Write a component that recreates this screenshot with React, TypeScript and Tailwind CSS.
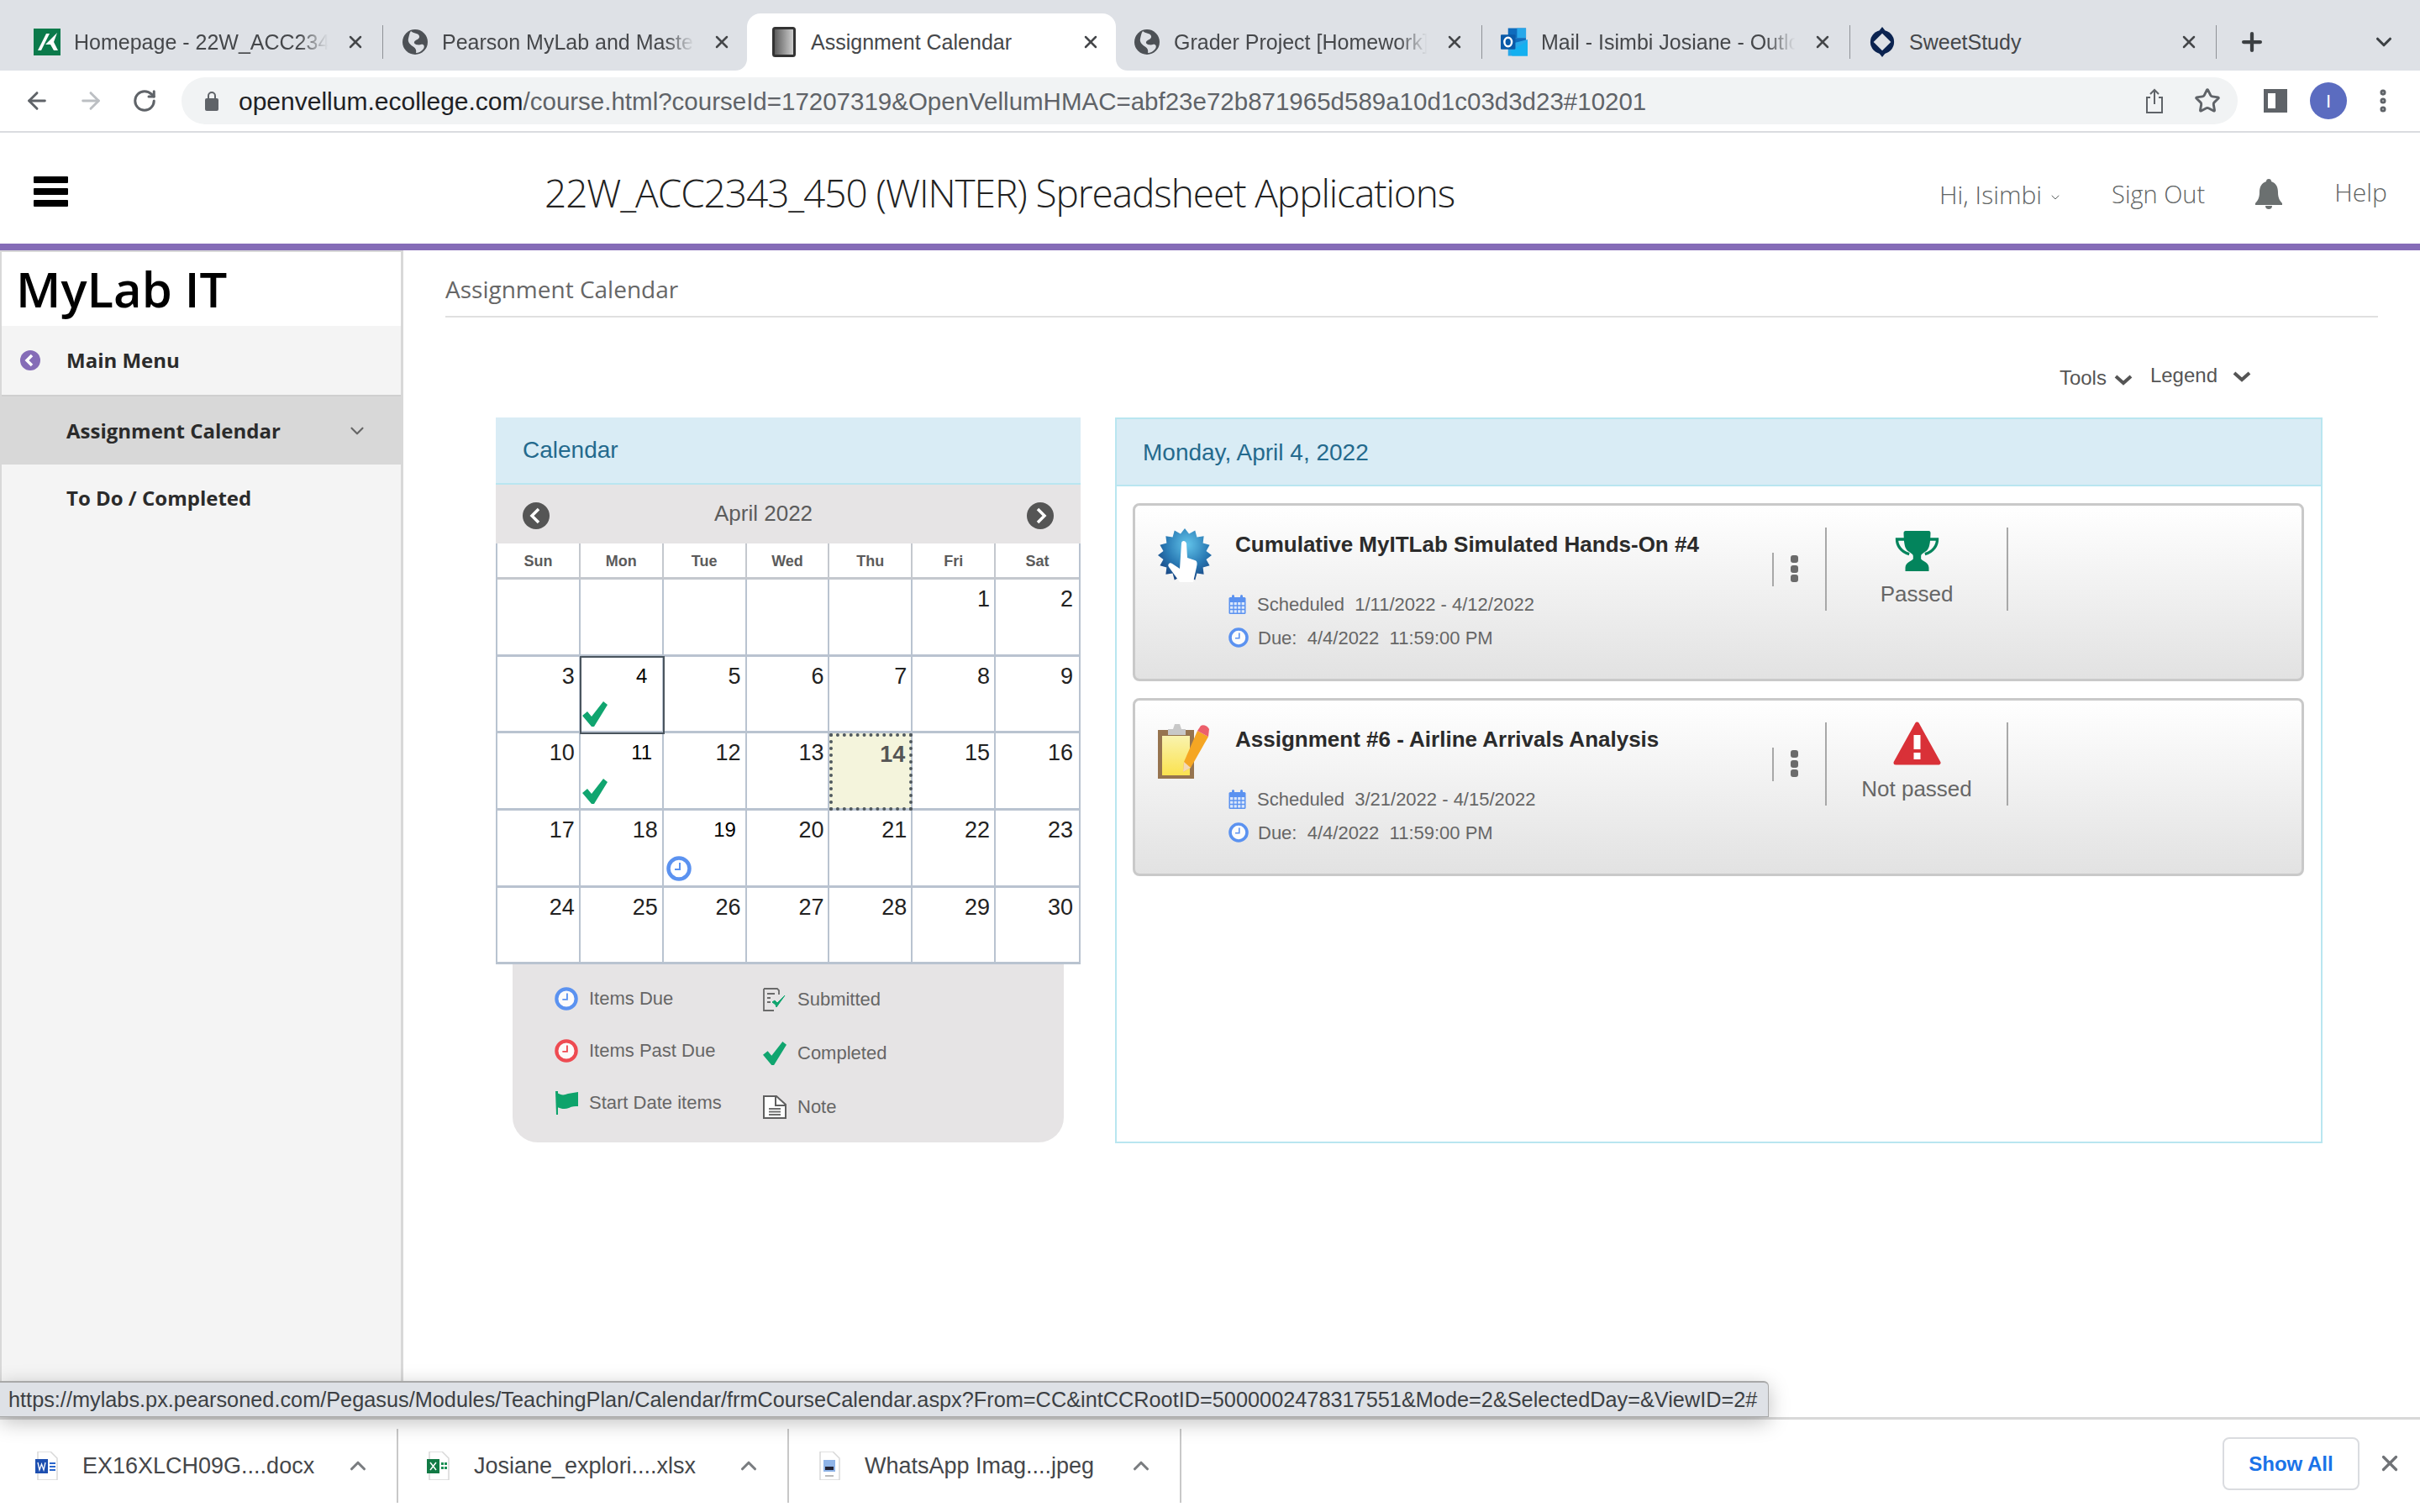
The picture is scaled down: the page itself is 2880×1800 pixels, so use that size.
import React from "react";
import { ArrowLeft, ArrowRight, RotateCw, Star, EllipsisVertical, X, Plus, ChevronDown, ChevronUp } from "lucide-react";

const Globe = () => (
  <svg width="32" height="34" viewBox="0 0 32 32">
    <circle cx="16" cy="16" r="15" fill="#4d5156" />
    <path d="M11 3c3 3 9 2 10 6s-5 4-6 7 5 4 8 3 5 2 3 5-6 5-9 5c1-4-1-6-4-8s-6-5-5-9 1-6 3-9z" fill="#dee1e6" />
  </svg>
);
const GreenIcon = () => (
  <svg width="32" height="32" viewBox="0 0 32 32">
    <rect width="32" height="32" fill="#0b7a4b" />
    <path d="M5 26 15 6h4L9 26zM14 19l14-14-4 11 5 10h-5l-4-7z" fill="#fff" />
  </svg>
);
const BookIcon = () => (
  <svg width="28" height="36" viewBox="0 0 28 36">
    <defs>
      <linearGradient id="bk" x1="0" y1="0" x2="1" y2="0">
        <stop offset="0" stopColor="#555" />
        <stop offset="1" stopColor="#d5d5d5" />
      </linearGradient>
    </defs>
    <rect x="1.5" y="1.5" width="25" height="33" rx="2" fill="url(#bk)" stroke="#333" strokeWidth="3" />
  </svg>
);
const OutlookIcon = () => (
  <svg width="33" height="34" viewBox="0 0 33 34">
    <rect x="9" y="0" width="22" height="12" fill="#0f6cbd" />
    <rect x="20" y="0" width="11" height="12" fill="#28a8ea" />
    <rect x="9" y="12" width="22" height="12" fill="#0f6cbd" />
    <path d="M9 20 33 14v20H9z" fill="#28a8ea" />
    <path d="M12 28 33 16v18H14z" fill="#14b0f0" />
    <rect x="0" y="8" width="18" height="18" rx="1" fill="#0a5aa8" />
    <ellipse cx="9" cy="17" rx="4.5" ry="5.5" fill="none" stroke="#fff" strokeWidth="2.5" />
  </svg>
);
const SweetIcon = () => (
  <svg width="34" height="38" viewBox="0 0 34 38">
    <circle cx="17" cy="19" r="15" fill="#0b2350" />
    <path d="M17 0l4 5h-8zM17 38l4-5h-8z" fill="#0b2350" />
    <path d="M17 8 28 19 17 30 6 19z" fill="#dee1e6" />
  </svg>
);

const Clock = ({ size = 30, color = "#5b92f0" }: { size?: number; color?: string }) => (
  <svg width={size} height={size} viewBox="0 0 30 30" className="shrink-0">
    <circle cx="15" cy="15" r="12.5" fill="#fff" fillOpacity="0.85" stroke={color} strokeWidth="4.5" />
    <path d="M16 8v8h-6" fill="none" stroke={color} strokeWidth="2" />
  </svg>
);
const Check = ({ size = 30 }: { size?: number }) => (
  <svg width={size} height={size} viewBox="0 0 30 30" className="shrink-0">
    <path d="M0 17l6-5 5 6L25 0l5 4-16 26h-3z" fill="#10a56f" />
  </svg>
);
const CalMini = () => (
  <svg width="21" height="23" viewBox="0 0 21 23" className="shrink-0">
    <rect x="0.5" y="3" width="20" height="20" rx="1.5" fill="#5b92f0" />
    <rect x="2" y="9" width="17" height="12.5" fill="#dce8fb" />
    <path d="M6 9v13M10.500 9v13M15 9v13M2 13h17M2 17.500h17" stroke="#5b92f0" strokeWidth="1.300" />
    <rect x="4" y="0" width="3" height="6" rx="1.500" fill="#5b92f0" />
    <rect x="14" y="0" width="3" height="6" rx="1.500" fill="#5b92f0" />
  </svg>
);
const sealPoints = Array.from({ length: 32 }, (_, i) => {
  const r = i % 2 === 0 ? 32 : 26;
  const a = (i * Math.PI) / 16;
  return `${32 + r * Math.sin(a)},${32 - r * Math.cos(a)}`;
}).join(" ");
const Seal = () => (
  <svg width="64" height="64" viewBox="0 0 64 64" className="shrink-0">
    <defs>
      <radialGradient id="seal" cx="0.55" cy="0.3" r="0.8">
        <stop offset="0" stopColor="#62c4ea" />
        <stop offset="0.5" stopColor="#2a7bb5" />
        <stop offset="1" stopColor="#12306f" />
      </radialGradient>
    </defs>
    <polygon points={sealPoints} fill="url(#seal)" />
    <path d="M28 18c0-4 5-4 6 0l1 17 9 3c3 1 3 4 2 8l-4 18H26L13 46c-2-3 1-6 4-4l9 6z" fill="#fff" />
  </svg>
);
const Clipboard = () => (
  <svg width="62" height="66" viewBox="0 0 62 66" className="shrink-0">
    <defs>
      <linearGradient id="pad" x1="0" y1="0" x2="0" y2="1">
        <stop offset="0" stopColor="#f9f3ae" />
        <stop offset="1" stopColor="#fbe24f" />
      </linearGradient>
    </defs>
    <rect x="0" y="8" width="43" height="58" fill="#96744f" />
    <rect x="5" y="15" width="33" height="47" fill="url(#pad)" />
    <path d="M12 14V7h6l2-6h6l2 6h5v7z" fill="#c8c8c8" />
    <path d="M47 9l13 7-21 37-9 5 1-12z" fill="#f5a623" />
    <path d="M47 9l4-6c3-2 8 0 10 4l-1 9z" fill="#ec5f6b" />
    <path d="M30 58l1-12 8 7z" fill="#f3d9b4" />
  </svg>
);
const Trophy = () => (
  <svg width="53" height="48" viewBox="0 0 156 144" className="mt-[6px]">
    <path d="M37 0h83c4 0 6 3 6 8-1 22-1 44-10 58-6 10-24 14-24 24v9c0 8 28 12 28 32v13H36v-13c0-20 28-24 28-32v-9c0-10-18-14-24-24C31 52 31 30 30 8c0-5 3-8 7-8z" fill="#03845c" />
    <path d="M36 30H6c0 22 14 45 44 53M120 30h30c0 22-14 45-44 53" fill="none" stroke="#03845c" strokeWidth="10" />
  </svg>
);
const Warn = () => (
  <svg width="57" height="52" viewBox="0 0 57 52">
    <path d="M28.500 3 54 49H3z" fill="#d93138" stroke="#d93138" strokeWidth="5" strokeLinejoin="round" />
    <rect x="24.500" y="16" width="8" height="17" fill="#fff" />
    <rect x="24.500" y="37" width="8" height="8" fill="#fff" />
  </svg>
);
const Kebab = () => (
  <div className="flex flex-col gap-[2.5px]">
    <div className="w-[9px] h-[9px] rounded-[3px] bg-[#6b6b6b]" />
    <div className="w-[9px] h-[9px] rounded-[3px] bg-[#6b6b6b]" />
    <div className="w-[9px] h-[9px] rounded-[3px] bg-[#6b6b6b]" />
  </div>
);
const NavCircle = ({ dir }: { dir: "l" | "r" }) => (
  <svg width="32" height="32" viewBox="0 0 32 32" className="shrink-0 mt-[3px]">
    <circle cx="16" cy="16" r="16" fill="#555" />
    <path d={dir === "l" ? "M19 8l-8 8 8 8" : "M13 8l8 8-8 8"} fill="none" stroke="#fff" strokeWidth="3.500" />
  </svg>
);
const FileIcon = ({ kind }: { kind: "word" | "excel" | "img" }) => (
  <svg width="28" height="34" viewBox="0 0 28 34" className="shrink-0">
    <path d="M3 0h15l8 8v26H3z" fill="#fff" stroke="#d8d8d8" strokeWidth="1.500" />
    {kind === "word" && (
      <>
        <rect x="0" y="9" width="15" height="17" fill="#1d4fb0" />
        <path d="M3 13l2 9 2.500-7 2.500 7 2-9" fill="none" stroke="#fff" strokeWidth="1.300" />
        <path d="M17 14h7M17 18h7M17 22h7" stroke="#2b66cc" strokeWidth="2" />
      </>
    )}
    {kind === "excel" && (
      <>
        <rect x="0" y="9" width="15" height="17" fill="#127a45" />
        <path d="M4 13l7 9M11 13l-7 9" stroke="#fff" strokeWidth="1.500" />
        <path d="M17 13h3v3h-3zM21 13h3v3h-3zM17 18h3v3h-3zM21 18h3v3h-3z" fill="#1c8f54" />
      </>
    )}
    {kind === "img" && (
      <>
        <rect x="7" y="10" width="14" height="14" fill="#8fb4e8" />
        <rect x="9" y="18" width="10" height="4" fill="#223" />
        <rect x="9" y="28" width="10" height="2" fill="#bbb" />
      </>
    )}
  </svg>
);
const ArrowLegend = ({ kind }: { kind: "submitted" | "note" }) =>
  kind === "submitted" ? (
    <svg width="28" height="28" viewBox="0 0 28 28" className="shrink-0">
      <path d="M1 1h16l2 2v5M1 1v26h12" fill="none" stroke="#6a6a6a" strokeWidth="1.800" />
      <path d="M5 7h9M5 12h4M5 17h4" stroke="#6a6a6a" strokeWidth="1.800" />
      <path d="M11 17l4 3 1 3 10-14-9 9-3-3z" fill="#10a56f" stroke="#10a56f" strokeWidth="1" />
    </svg>
  ) : (
    <svg width="28" height="28" viewBox="0 0 28 28" className="shrink-0">
      <path d="M1 1h15l11 10v16H1z" fill="#fff" stroke="#5f5f5f" strokeWidth="2" />
      <path d="M15 1v11h12" fill="none" stroke="#5f5f5f" strokeWidth="2" />
      <path d="M7 16h14M7 19.500h14M7 23h14" stroke="#6f6f6f" strokeWidth="2" />
    </svg>
  );
const Flag = () => (
  <svg width="28" height="28" viewBox="0 0 28 28" className="shrink-0">
    <path d="M1 0h3v28H2z" fill="#0ea36b" />
    <path d="M3 2c5 3 8 3 13 1 4-1 8-1 12-2v17c-4 0-7 0-11 2-5 2-9 1-14-1z" fill="#0ea36b" />
  </svg>
);

type TabP = {
  icon: React.ReactNode;
  label: string;
  sep?: boolean;
  box: string;
  fade?: boolean;
  active?: boolean;
};
const Tab = ({ icon, label, sep, box, fade, active }: TabP) => (
  <div className={`relative flex items-center shrink-0 h-[68px] ${box} ${active ? "bg-white rounded-t-[16px]" : ""}`}>
    {active && (
      <>
        <svg width="14" height="14" viewBox="0 0 14 14" className="absolute bottom-0 -left-[14px]">
          <path d="M14 0v14H0c8 0 14-6 14-14z" fill="#fff" />
        </svg>
        <svg width="14" height="14" viewBox="0 0 14 14" className="absolute bottom-0 -right-[14px]">
          <path d="M0 0v14h14C6 14 0 8 0 0z" fill="#fff" />
        </svg>
      </>
    )}
    {sep && <div className="w-[1px] h-[40px] ml-[2px] mr-[22px] bg-[#8f9297] shrink-0" />}
    <div className="w-[32px] flex justify-center shrink-0">{icon}</div>
    <div
      className={`flex-1 min-w-0 ml-[16px] mr-[8px] whitespace-nowrap text-[25px] leading-[32px] text-[#45474a] ${fade ? "[mask-image:linear-gradient(90deg,#000_85%,transparent_96%)]" : ""}`}
    >
      {label}
    </div>
    <X size={24} strokeWidth={2.5} color="#45474a" className="shrink-0 mr-[18px]" />
  </div>
);

const Sep = () => <div className="w-[1px] h-[40px] bg-[#8f9297] shrink-0" />;

const weeks: (number | null)[][] = [
  [null, null, null, null, null, 1, 2],
  [3, 4, 5, 6, 7, 8, 9],
  [10, 11, 12, 13, 14, 15, 16],
  [17, 18, 19, 20, 21, 22, 23],
  [24, 25, 26, 27, 28, 29, 30],
];

const Cell = ({ d, col }: { d: number | null; col: number }) => {
  const small = d === 4 || d === 11 || d === 19;
  const base = "relative flex flex-col justify-between h-[91.7px] border-b-[3px] border-[#b9c3d0] " + (col < 6 ? "border-r-[2px] " : "");
  if (d === 14)
    return (
      <div className={base + "bg-[#f4f4dc] outline-dotted outline-[4px] -outline-offset-[4px] outline-[#50595f]"}>
        <div className="text-right pr-[7px] pt-[9px] text-[27px] leading-[32px] font-bold text-[#555]">14</div>
      </div>
    );
  return (
    <div className={base + (d === 4 ? "outline-[2.5px] outline-solid outline-[#4a555e] -outline-offset-[1px] z-10" : "")}>
      {small ? (
        <div className="self-end w-[48px] text-center pt-[7px] text-[24px] leading-[32px] text-black">{d}</div>
      ) : (
        <div className={`text-right pt-[7px] text-[27px] leading-[32px] text-[#222] ${col === 6 ? "pr-[7px]" : "pr-[5px]"}`}>{d}</div>
      )}
      {(d === 4 || d === 11) && (
        <div className="pl-[2px] pb-[5px]">
          <Check />
        </div>
      )}
      {d === 19 && (
        <div className="pl-[3px] pb-[5px]">
          <Clock />
        </div>
      )}
    </div>
  );
};

const LegendRow = ({ icon, label, h }: { icon: React.ReactNode; label: string; h: string }) => (
  <div className={`flex items-center gap-[13px] ${h}`}>
    {icon}
    <span className="text-[22px] leading-[28px] text-[#666]">{label}</span>
  </div>
);

const AssignCard = ({
  icon,
  title,
  sched,
  status,
  statusIcon,
}: {
  icon: React.ReactNode;
  title: string;
  sched: string;
  status: string;
  statusIcon: React.ReactNode;
}) => (
  <div className="h-[212px] rounded-[8px] border-[3px] border-[#c9c9c9] bg-gradient-to-b from-white to-[#e2e2e2] flex pl-[27px]">
    <div className="w-[63px] shrink-0 pt-[27px]">{icon}</div>
    <div className="w-[640px] ml-[29px] shrink-0">
      <div className="pt-[30px] text-[26px] leading-[32px] font-bold text-[#2b2b2b] whitespace-nowrap">{title}</div>
      <div className="mt-[43px] -ml-[8px] flex items-center gap-[13px] h-[24px] text-[22px] text-[#666] whitespace-pre">
        <CalMini />
        <span>Scheduled  {sched}</span>
      </div>
      <div className="mt-[16px] -ml-[8px] flex items-center gap-[11px] h-[24px] text-[22px] text-[#666] whitespace-pre">
        <Clock size={24} />
        <span>Due:  4/4/2022  11:59:00 PM</span>
      </div>
    </div>
    <div className="h-[40px] w-[2px] bg-[#a8a8a8] mt-[56px] ml-[-1px] shrink-0" />
    <div className="w-[61px] flex pl-[20px] pt-[59px] shrink-0">
      <Kebab />
    </div>
    <div className="h-[99px] w-[2px] bg-[#a8a8a8] mt-[26px] shrink-0" />
    <div className="w-[214px] shrink-0 flex flex-col items-center pt-[25px]">
      <div className="h-[52px] flex items-center justify-center">{statusIcon}</div>
      <div className="mt-[12px] text-[26px] leading-[32px] text-[#666]">{status}</div>
    </div>
    <div className="h-[99px] w-[2px] bg-[#a8a8a8] mt-[26px] shrink-0" />
  </div>
);

const Download = ({
  kind,
  name,
  box,
}: {
  kind: "word" | "excel" | "img";
  name: string;
  box: string;
}) => (
  <div className={`h-[88px] flex items-center border-r-[2px] border-[#c8c8c8] shrink-0 ${box}`}>
    <FileIcon kind={kind} />
    <div className="flex-1 ml-[28px] text-[27px] text-[#45474a] whitespace-nowrap">{name}</div>
    <ChevronUp size={30} strokeWidth={2.5} color="#7a7d80" className="mr-[31px] shrink-0" />
  </div>
);

export default function App() {
  return (
    <div className="w-[2880px] h-[1800px] flex flex-col overflow-hidden bg-white font-['Liberation_Sans',sans-serif]">
      {/* tab strip */}
      <div className="h-[84px] bg-[#dee1e6] flex items-end pl-[15px] shrink-0">
        <Tab box="w-[438px] pl-[25px]" icon={<GreenIcon />} label="Homepage - 22W_ACC234" fade />
        <Tab box="w-[436px]" sep icon={<Globe />} label="Pearson MyLab and Master" fade />
        <Tab box="w-[439px] pl-[28px]" active icon={<BookIcon />} label="Assignment Calendar" />
        <Tab box="w-[433px] pl-[21px]" icon={<Globe />} label="Grader Project [Homework]" fade />
        <Tab box="w-[438px]" sep icon={<OutlookIcon />} label="Mail - Isimbi Josiane - Outlo" fade />
        <Tab box="w-[436px]" sep icon={<SweetIcon />} label="SweetStudy" />
        <div className="h-[68px] flex items-center shrink-0 ml-[2px]">
          <Sep />
          <Plus size={34} strokeWidth={3} color="#3c4043" className="ml-[25px]" />
          <ChevronDown size={30} strokeWidth={2.5} color="#3c4043" className="ml-[125px]" />
        </div>
      </div>

      {/* toolbar */}
      <div className="h-[74px] border-b-[2px] border-[#dadce0] flex items-center pl-[28px] shrink-0">
        <ArrowLeft size={32} strokeWidth={2.2} color="#5f6368" />
        <ArrowRight size={32} strokeWidth={2.2} color="#bcbfc3" className="ml-[32px]" />
        <RotateCw size={30} strokeWidth={2.4} color="#5f6368" className="ml-[33px]" />
        <div className="ml-[29px] w-[2447px] h-[56px] rounded-full bg-[#f1f3f4] flex items-center pl-[28px] pr-[20px]">
          <svg width="16" height="24" viewBox="0 0 16 24" className="shrink-0">
            <path d="M4 10V6a4 4 0 0 1 8 0v4" fill="none" stroke="#5f6368" strokeWidth="2" />
            <rect x="0" y="9" width="16" height="15" rx="2" fill="#5f6368" />
          </svg>
          <div className="ml-[24px] pt-[2px] text-[29.5px] text-[#5f6368] whitespace-nowrap">
            <span className="text-[30px] text-[#202124]">openvellum.ecollege.com</span>/course.html?courseId=17207319&OpenVellumHMAC=abf23e72b871965d589a10d1c03d3d23#10201
          </div>
          <svg width="22" height="30" viewBox="0 0 22 30" className="ml-auto shrink-0" fill="none" stroke="#5f6368" strokeWidth="2">
            <path d="M6 11H2v18h18V11h-4M11 19V2M6 7l5-5 5 5" />
          </svg>
          <Star size={32} strokeWidth={2.2} color="#5f6368" className="ml-[36px] shrink-0" />
        </div>
        <div className="ml-[31px] w-[28px] h-[28px] border-[5px] border-[#5f6368] border-r-[14px] border-l-[5px]" />
        <div className="ml-[27px] w-[44px] h-[44px] rounded-full bg-[#5b6cc0] flex items-center justify-center text-white text-[22px]">I</div>
        <EllipsisVertical size={34} strokeWidth={3} color="#5f6368" className="ml-[26px]" />
      </div>

      {/* header */}
      <div className="h-[140px] border-b-[8px] border-[#856cb7] flex items-center pl-[40px] pt-[8px] shrink-0 font-['Open_Sans',sans-serif]">
        <div className="w-[41px] flex flex-col gap-[6px] shrink-0">
          <div className="h-[8px] rounded-[1px] bg-black" />
          <div className="h-[8px] rounded-[1px] bg-black" />
          <div className="h-[8px] rounded-[1px] bg-black" />
        </div>
        <div className="ml-[567px] w-[1660px] mt-[2px] text-[46px] tracking-[-1.08px] font-light text-[#222] whitespace-nowrap">22W_ACC2343_450 (WINTER) Spreadsheet Applications</div>
        <div className="flex items-center mt-[6px] text-[30px] font-light text-[#5f6464] whitespace-nowrap">
          <span>Hi, Isimbi</span>
          <ChevronDown size={16} strokeWidth={1.5} className="ml-[8px] mt-[8px]" />
          <span className="ml-[59px] text-[29px]">Sign Out</span>
          <svg width="36" height="36" viewBox="0 0 36 36" className="ml-[58px]">
            <path d="M18 0c2 0 3 1 3 3 6 2 8 7 8 13 0 6 2 10 5 13v2H2v-2c3-3 5-7 5-13 0-6 2-11 8-13 0-2 1-3 3-3zM14 32h8c0 3-2 4-4 4s-4-1-4-4z" fill="#6b7070" />
          </svg>
          <span className="ml-[60px] -mt-[6px]">Help</span>
        </div>
      </div>

      {/* body */}
      <div className="relative flex flex-1 min-h-0">
        <div className="w-[480px] shrink-0 flex flex-col bg-[#f4f4f4] border-l-[2px] border-r-[3px] border-t-[2px] border-[#d8d8d8] font-['Open_Sans',sans-serif]">
          <div className="h-[88px] bg-white pl-[17px] text-[58px] leading-[88px] font-semibold text-black whitespace-nowrap">MyLab IT</div>
          <div className="h-[84px] flex items-center pl-[22px] border-b-[2px] border-[#cfcfcf]">
            <svg width="24" height="24" viewBox="0 0 24 24" className="shrink-0">
              <circle cx="12" cy="12" r="12" fill="#856cb7" />
              <path d="M14 6l-6 6 6 6" fill="none" stroke="#fff" strokeWidth="3.500" />
            </svg>
            <span className="ml-[31px] text-[24px] font-bold text-[#2b2b2b]">Main Menu</span>
          </div>
          <div className="h-[81px] -mx-[2px] flex items-center pl-[79px] bg-[#d8d8d8]">
            <span className="text-[24px] font-bold text-[#2b2b2b]">Assignment Calendar</span>
            <ChevronDown size={26} strokeWidth={2} color="#666" className="ml-auto mr-[41px]" />
          </div>
          <div className="h-[80px] flex items-center pl-[77px]">
            <span className="text-[24px] font-bold text-[#2b2b2b]">To Do / Completed</span>
          </div>
        </div>

        <div className="flex-1 min-w-0 pl-[50px] pr-[50px]">
          <div className="h-[80px] border-b-[2px] border-[#e0e0e0] text-[28px] leading-[92px] text-[#666] font-['Open_Sans',sans-serif]">Assignment Calendar</div>
          <div className="h-[119px] flex justify-end items-start pr-[151px] text-[#555]">
            <div className="flex items-center mt-[58px] text-[24px] leading-[28px]">
              Tools
              <svg width="22" height="14" viewBox="0 0 22 14" className="ml-[9px] mt-[4px]">
                <path d="M2 3l9 8 9-8" fill="none" stroke="#555" strokeWidth="4" />
              </svg>
            </div>
            <div className="flex items-center mt-[55px] ml-[21px] text-[24px] leading-[28px]">
              Legend
              <svg width="22" height="14" viewBox="0 0 22 14" className="ml-[18px] mt-[2px]">
                <path d="M2 3l9 8 9-8" fill="none" stroke="#555" strokeWidth="4" />
              </svg>
            </div>
          </div>

          <div className="flex ml-[60px] gap-[41px]">
            {/* calendar */}
            <div className="w-[696px] shrink-0">
              <div className="h-[80px] bg-[#d9ecf5] border-b-[2px] border-[#b9e6f0] pl-[32px] text-[28px] leading-[78px] text-[#246a8d]">Calendar</div>
              <div className="h-[70px] bg-[#e6e4e5] flex items-center pl-[32px] pr-[32px] text-[26px] text-[#5c5c5c]">
                <NavCircle dir="l" />
                <span className="ml-[196px] -mt-[2px]">April 2022</span>
                <span className="ml-auto"><NavCircle dir="r" /></span>
              </div>
              <div className="border-l-[2px] border-r-[2px] border-[#b9c3d0]">
                <div className="grid grid-cols-7 h-[43px] border-b-[3px] border-[#c4c8ce]">
                  {["Sun", "Mon", "Tue", "Wed", "Thu", "Fri", "Sat"].map((d, i) => (
                    <div key={d} className={`flex items-center justify-center pt-[2px] text-[18px] font-bold text-[#5b5b5b] ${i < 6 ? "border-r-[2px] border-[#c4c8ce]" : ""}`}>{d}</div>
                  ))}
                </div>
                <div className="grid grid-cols-7">
                  {weeks.flat().map((d, i) => (
                    <Cell key={i} d={d} col={i % 7} />
                  ))}
                </div>
              </div>
              <div className="mx-[20px] h-[212px] bg-[#e6e4e5] rounded-b-[30px] flex pl-[50px] pt-[10px]">
                <div className="w-[248px]">
                  <LegendRow h="h-[62px]" icon={<Clock size={28} />} label="Items Due" />
                  <LegendRow h="h-[62px]" icon={<Clock size={28} color="#ee4b52" />} label="Items Past Due" />
                  <LegendRow h="h-[62px]" icon={<Flag />} label="Start Date items" />
                </div>
                <div>
                  <LegendRow h="h-[64px]" icon={<ArrowLegend kind="submitted" />} label="Submitted" />
                  <LegendRow h="h-[64px]" icon={<Check size={28} />} label="Completed" />
                  <LegendRow h="h-[64px]" icon={<ArrowLegend kind="note" />} label="Note" />
                </div>
              </div>
            </div>

            {/* day panel */}
            <div className="w-[1437px] h-[864px] shrink-0 border-[2px] border-[#b9e6f0]">
              <div className="h-[80px] bg-[#d9ecf5] border-b-[2px] border-[#b9e6f0] pl-[31px] text-[28px] leading-[80px] text-[#246a8d]">Monday, April 4, 2022</div>
              <div className="pl-[19px] pr-[20px] pt-[20px] flex flex-col gap-[20px]">
                <AssignCard
                  icon={<Seal />}
                  title="Cumulative MyITLab Simulated Hands-On #4"
                  sched="1/11/2022 - 4/12/2022"
                  status="Passed"
                  statusIcon={<Trophy />}
                />
                <AssignCard
                  icon={<Clipboard />}
                  title="Assignment #6 - Airline Arrivals Analysis"
                  sched="3/21/2022 - 4/15/2022"
                  status="Not passed"
                  statusIcon={<Warn />}
                />
              </div>
            </div>
          </div>
        </div>

        {/* status bubble */}
        <div className="absolute left-0 bottom-0 w-[2105px] h-[43px] bg-[#dee1e6] border-t-[2px] border-r-[1px] border-b-[1px] border-[#a8a8a8] rounded-tr-[6px] shadow-[0_6px_24px_rgba(0,0,0,0.25)] pl-[10px] text-[25.3px] leading-[40px] text-[#3c4043] whitespace-nowrap">
          https://mylabs.px.pearsoned.com/Pegasus/Modules/TeachingPlan/Calendar/frmCourseCalendar.aspx?From=CC&intCCRootID=5000002478317551&Mode=2&SelectedDay=&ViewID=2#
        </div>
      </div>

      {/* download bar */}
      <div className="h-[113px] border-t-[3px] border-[#d8d8d8] flex items-start pt-[11px] shrink-0">
        <Download box="w-[474px] pl-[42px]" kind="word" name="EX16XLCH09G....docx" />
        <Download box="w-[465px] pl-[34px]" kind="excel" name="Josiane_explori....xlsx" />
        <Download box="w-[467px] pl-[34px]" kind="img" name="WhatsApp Imag....jpeg" />
        <div className="ml-auto mt-[10px] w-[163px] h-[63px] rounded-[8px] border-[2px] border-[#dadce0] flex items-center justify-center text-[24px] font-bold text-[#1a73e8]">Show All</div>
        <X size={30} strokeWidth={2.6} color="#6f7276" className="ml-[21px] mt-[26px] mr-[21px]" />
      </div>
    </div>
  );
}
